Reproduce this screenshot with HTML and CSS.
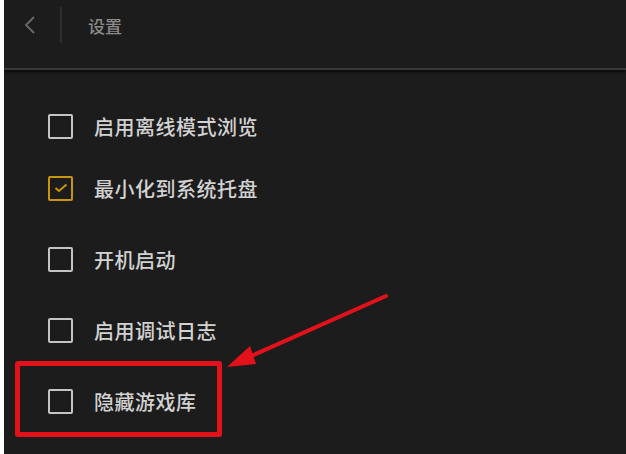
FILE: index.html
```html
<!DOCTYPE html>
<html lang="zh-CN">
<head>
  <meta charset="UTF-8">
  <title>设置</title>
  <link rel="stylesheet" href="styles.css">
</head>
<body>
  <div class="app">
    <header class="topbar">
      <button class="back-btn" aria-label="返回">
        <svg width="12" height="18" viewBox="0 0 12 18"><path d="M10 1 L2 9 L10 17" fill="none" stroke="#6a6a6a" stroke-width="1.8"/></svg>
      </button>
      <span class="divider"></span>
      <h1 class="title">设置</h1>
    </header>

    <ul class="settings">
      <li class="row">
        <span class="box"></span>
        <span class="label">启用离线模式浏览</span>
      </li>
      <li class="row row-tight">
        <span class="box checked">
          <svg width="14" height="10" viewBox="0 0 14 10"><path d="M1.5 5 L5 8 L12.5 1.5" fill="none" stroke="#c9960a" stroke-width="2"/></svg>
        </span>
        <span class="label">最小化到系统托盘</span>
      </li>
      <li class="row">
        <span class="box"></span>
        <span class="label">开机启动</span>
      </li>
      <li class="row">
        <span class="box"></span>
        <span class="label">启用调试日志</span>
      </li>
      <li class="row">
        <span class="box"></span>
        <span class="label">隐藏游戏库</span>
      </li>
    </ul>

    <!-- annotation overlay -->
    <div class="highlight"></div>
    <svg class="arrow" width="626" height="454" viewBox="0 0 626 454">
      <line x1="386" y1="296" x2="240" y2="361" stroke="#e3121a" stroke-width="4" stroke-linecap="round"/>
      <polygon points="227,367 250,346 256,364" fill="#e3121a"/>
    </svg>
  </div>
</body>
</html>
```

FILE: styles.css
```css
html, body {
  margin: 0;
  padding: 0;
  background: #fff;
}

.app {
  position: relative;
  margin-left: 4px;
  width: 622px;
  height: 454px;
  background: #1c1c1c;
  font-family: "Noto Sans CJK SC", "Noto Sans", sans-serif;
  overflow: hidden;
}

/* Top bar */
.topbar {
  display: flex;
  align-items: center;
  height: 50px;
  padding-bottom: 18px;
  border-bottom: 2px solid #393939;
  box-shadow: 0 2px 2px rgba(0, 0, 0, 0.6);
}

.back-btn {
  display: flex;
  align-items: center;
  justify-content: center;
  width: 24px;
  margin-left: 14px;
  padding: 0;
  background: none;
  border: none;
}

.divider {
  width: 2px;
  height: 36px;
  margin-left: 18px;
  background: #2e2e2e;
}

.title {
  margin: 0 0 0 26px;
  font-size: 17px;
  font-weight: 500;
  color: #8a8a8a;
}

/* Settings list */
.settings {
  list-style: none;
  margin: 0;
  padding: 36px 0 0 44px;
}

.row {
  display: flex;
  align-items: center;
  height: 40px;
}

.row + .row {
  margin-top: 31px;
}

.row.row-tight {
  margin-top: 22px;
}

.box {
  display: flex;
  align-items: center;
  justify-content: center;
  box-sizing: border-box;
  width: 25px;
  height: 25px;
  border: 2px solid #c4c4c4;
  border-radius: 2px;
}

.box.checked {
  border-color: #c9960a;
}

.label {
  margin-left: 21px;
  font-size: 20px;
  font-weight: 500;
  letter-spacing: 0.5px;
  color: #d2d2d2;
}

/* Annotation */
.highlight {
  position: absolute;
  left: 11px;
  top: 361px;
  width: 197px;
  height: 66px;
  border: 5px solid #e3121a;
  border-radius: 3px;
}

.arrow {
  position: absolute;
  left: -4px;
  top: 0;
}
```
